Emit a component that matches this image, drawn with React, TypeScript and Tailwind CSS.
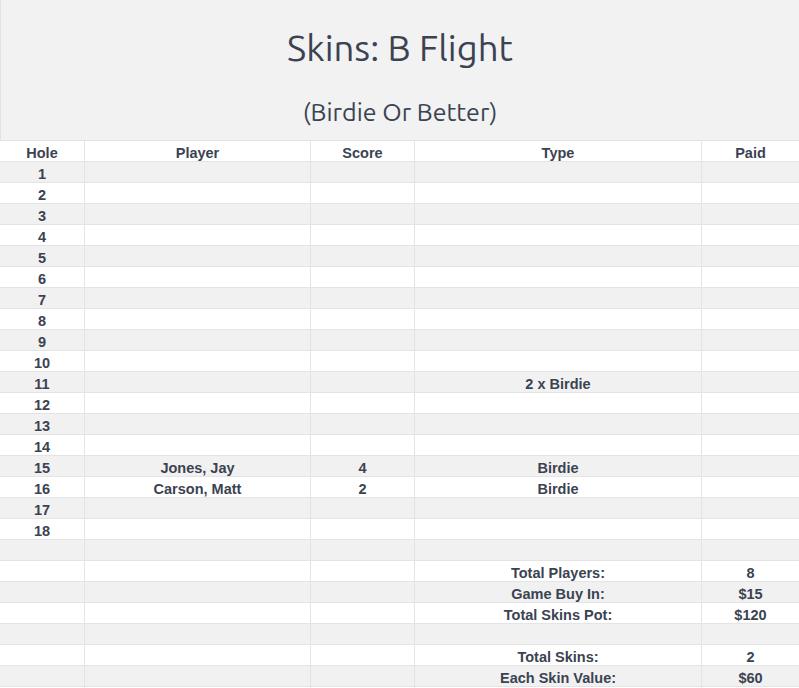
type Row = {
  hole?: string;
  player?: string;
  score?: string;
  type?: string;
  paid?: string;
};

const holes: Row[] = Array.from({length: 18}, (_, i) => ({hole: String(i + 1)}));
holes[10].type = '2 x Birdie';
holes[14] = {hole: '15', player: 'Jones, Jay', score: '4', type: 'Birdie'};
holes[15] = {hole: '16', player: 'Carson, Matt', score: '2', type: 'Birdie'};

const rows: Row[] = [
  ...holes,
  {},
  {type: 'Total Players:', paid: '8'},
  {type: 'Game Buy In:', paid: '$15'},
  {type: 'Total Skins Pot:', paid: '$120'},
  {},
  {type: 'Total Skins:', paid: '2'},
  {type: 'Each Skin Value:', paid: '$60'},
];

const cols = 'grid grid-cols-[85px_226px_104px_287px_1fr]';

function Cell({children, last}: {children?: React.ReactNode; last?: boolean}) {
  return (
    <div className={`flex items-center justify-center pt-[2px] ${last ? '' : 'border-r border-[#e4e4e4]'}`}>
      {children}
    </div>
  );
}

export default function App() {
  return (
    <div className="w-[799px] h-[688px] bg-white text-[#3b4352] overflow-hidden">
      {/* Title block */}
      <div className="h-[141px] bg-[#f2f2f2] border-b border-l border-[#e2e2e2] flex flex-col items-center font-['Ubuntu','Noto_Sans',sans-serif]">
        <h1 className="mt-[23px] text-[36.5px] leading-[50px]">Skins: B Flight</h1>
        <h2 className="mt-[23px] text-[25px] leading-[32px]">(Birdie Or Better)</h2>
      </div>

      <div className="font-['Liberation_Sans',Arial,sans-serif] font-bold text-[14.5px]">
        <div className={`${cols} h-[21px] bg-white border-b border-[#e4e4e4]`}>
          <Cell>Hole</Cell>
          <Cell>Player</Cell>
          <Cell>Score</Cell>
          <Cell>Type</Cell>
          <Cell last>Paid</Cell>
        </div>
        {rows.map((r, i) => (
          <div
            key={i}
            className={`${cols} h-[21px] border-b border-[#e4e4e4] ${i % 2 === 0 ? 'bg-[#f1f1f1]' : 'bg-white'}`}
          >
            <Cell>{r.hole}</Cell>
            <Cell>{r.player}</Cell>
            <Cell>{r.score}</Cell>
            <Cell>{r.type}</Cell>
            <Cell last>{r.paid}</Cell>
          </div>
        ))}
      </div>
    </div>
  );
}
